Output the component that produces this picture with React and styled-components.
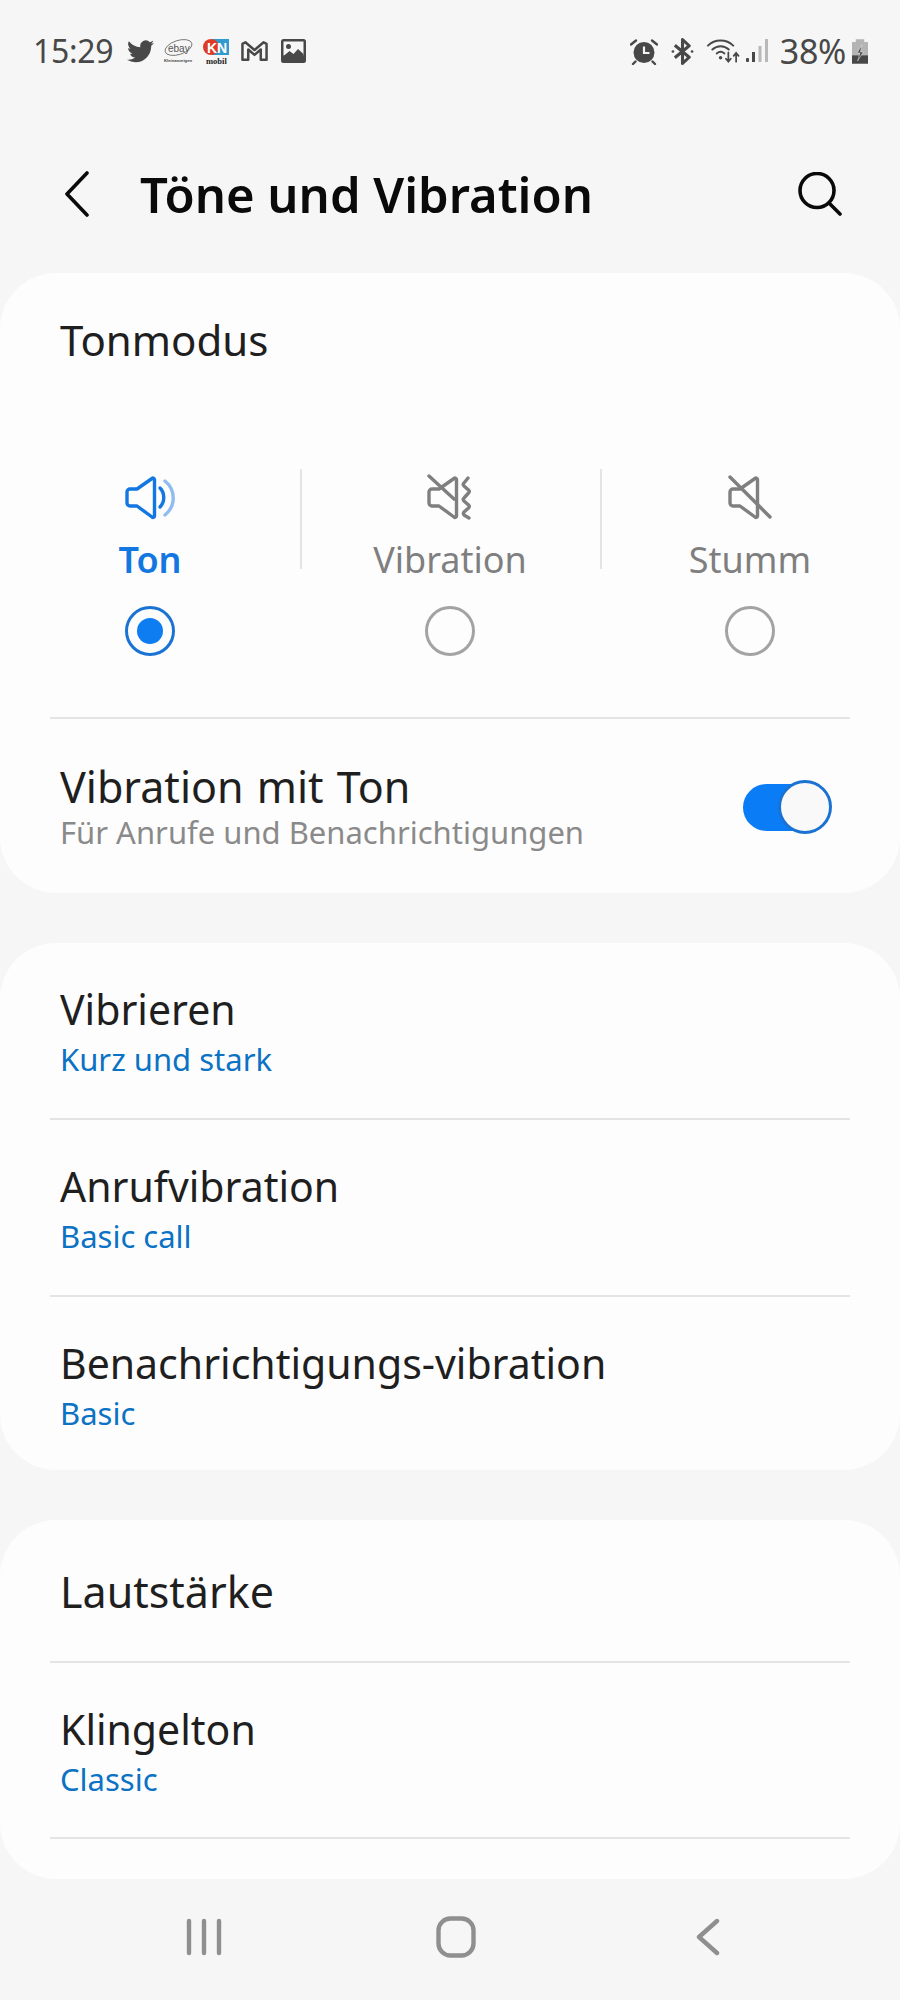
import styled, { createGlobalStyle } from "styled-components";

const GlobalStyle = createGlobalStyle`
  html, body {
    margin: 0;
    padding: 0;
    background: #f6f6f6;
  }
  * {
    box-sizing: border-box;
  }
`;

const Page = styled.div`
  width: 900px;
  height: 2000px;
  background: #f6f6f6;
  font-family: "Noto Sans", "Open Sans", sans-serif;
  display: flex;
  flex-direction: column;
  overflow: hidden;
`;

const StatusBar = styled.div`
  height: 100px;
  padding: 2px 32px 0 33px;
  display: flex;
  align-items: center;
  justify-content: space-between;
  color: #484848;
`;

const StatusGroup = styled.div`
  display: flex;
  align-items: center;
`;

const Glyph = styled.span`
  display: flex;
  margin-left: ${(p) => p.$ml || 0}px;
`;

const StatusText = styled.span`
  font-size: ${(p) => p.$size || 32}px;
  line-height: 36px;
  letter-spacing: -0.3px;
  margin-left: ${(p) => p.$ml || 0}px;
`;

const Header = styled.header`
  height: 173px;
  padding: 14px 58px 0 65px;
  display: flex;
  align-items: center;
`;

const Title = styled.h1`
  flex: 1;
  margin: 0 0 0 51px;
  font-size: 49px;
  font-weight: 600;
  color: #0a0a0a;
`;

const Cards = styled.div`
  display: flex;
  flex-direction: column;
  gap: 50px;
`;

const Card = styled.section`
  background: #fdfdfd;
  border-radius: 56px;
  overflow: hidden;
  height: ${(p) => p.$height}px;
`;

const CardTitle = styled.div`
  padding: 39px 60px 0;
  font-size: 42px;
  line-height: 56px;
  color: #1f1f1f;
`;

const ModeRow = styled.div`
  margin-top: 101px;
  padding-bottom: 61px;
  display: grid;
  grid-template-columns: repeat(3, 300px);
`;

const Mode = styled.div`
  position: relative;
  padding-top: 5px;
  display: flex;
  flex-direction: column;
  align-items: center;
  color: ${(p) => (p.$active ? "#1277e0" : "#7f7f7f")};

  &::before {
    content: "";
    display: ${(p) => (p.$divided ? "block" : "none")};
    position: absolute;
    left: 0;
    top: 0;
    width: 2px;
    height: 100px;
    background: #e4e4e4;
  }
`;

const ModeLabel = styled.div`
  margin-top: 17px;
  font-size: 36px;
  line-height: 46px;
  font-weight: ${(p) => (p.$active ? 600 : 400)};
`;

const Radio = styled.div`
  margin-top: 23px;
  width: 50px;
  height: 50px;
  border-radius: 50%;
  border: 3px solid ${(p) => (p.$active ? "#1a73d2" : "#a3a3a3")};
  display: flex;
  align-items: center;
  justify-content: center;

  &::after {
    content: "";
    display: ${(p) => (p.$active ? "block" : "none")};
    width: 26px;
    height: 26px;
    border-radius: 50%;
    background: #0f7df2;
  }
`;

const Divider = styled.div`
  height: 2px;
  margin: 0 50px;
  background: #e4e4e4;
`;

const Row = styled.div`
  height: ${(p) => p.$height || 175}px;
  padding: 2px 60px 0;
  display: flex;
  align-items: center;
  justify-content: space-between;
`;

const RowText = styled.div`
  display: flex;
  flex-direction: column;
`;

const RowTitle = styled.div`
  font-size: ${(p) => p.$size || 41}px;
  line-height: 50px;
  word-spacing: 2px;
  color: #1f1f1f;
`;

const RowSub = styled.div`
  margin-top: ${(p) => (p.$blue ? 5 : 0)}px;
  font-size: 31px;
  line-height: 40px;
  color: ${(p) => (p.$blue ? "#0b72c4" : "#8a8a8a")};
`;

const Toggle = styled.div`
  position: relative;
  width: 84px;
  height: 47px;
  margin-right: 13px;
  border-radius: 24px;
  background: #0a7cf5;
`;

const Knob = styled.div`
  position: absolute;
  right: -5px;
  top: -4px;
  width: 54px;
  height: 54px;
  border-radius: 50%;
  background: #f9f9f9;
  border: 3px solid #1a73d2;
`;

const NavBar = styled.nav`
  flex: 1;
  padding: 0 0 5px 186px;
  display: grid;
  grid-template-columns: 250px 260px auto;
  align-items: center;
`;

const TwitterIcon = () => (
  <svg width="27" height="23" viewBox="0 0 24 20" fill="#484848">
    <path d="M24 2.400c-.9.4-1.800.7-2.800.8 1-.6 1.800-1.600 2.200-2.700-1 .6-2 1-3.100 1.200A4.900 4.900 0 0 0 11.900 6.200 14 14 0 0 1 1.700.9a4.900 4.900 0 0 0 1.500 6.600c-.8 0-1.600-.2-2.200-.6 0 2.400 1.700 4.400 3.900 4.900-.7.2-1.500.2-2.200.1.6 2 2.400 3.400 4.600 3.400A9.900 9.900 0 0 1 0 17.300 14 14 0 0 0 7.500 19.500c9.100 0 14.300-7.700 14-14.600 1-.7 1.800-1.600 2.500-2.500z" />
  </svg>
);

const EbayIcon = () => (
  <svg width="30" height="25" viewBox="0 0 30 25">
    <ellipse cx="15.500" cy="8.500" rx="14" ry="7" transform="rotate(-18 15.500 8.500)" fill="none" stroke="#666" strokeWidth="0.800" />
    <text x="5" y="12.500" fontFamily="Liberation Sans" fontSize="10" fill="#555">ebay</text>
    <text x="1" y="23" fontFamily="Liberation Sans" fontSize="4" fontWeight="700" fill="#444" textLength="28" lengthAdjust="spacingAndGlyphs">Kleinanzeigen</text>
  </svg>
);

const KnIcon = () => (
  <svg width="26" height="25" viewBox="0 0 26 25">
    <rect x="9" y="0" width="17" height="16" fill="#2f9bd0" />
    <circle cx="8" cy="8" r="8" fill="#dd3b26" />
    <text x="4" y="13.500" fontFamily="Liberation Sans" fontSize="14" fontWeight="700" fill="#fff">KN</text>
    <text x="3" y="25" fontFamily="Liberation Serif" fontSize="8.500" fontWeight="700" fill="#222">mobil</text>
  </svg>
);

const GmailIcon = () => (
  <svg width="27" height="22" viewBox="0 0 28 22" fill="none" stroke="#484848" strokeWidth="2.600" strokeLinejoin="round">
    <path d="M1.500 20V3.500l3-1.500L14 10l9.500-8 3 1.500V20h-6V9.500L14 15 7.500 9.500V20z" />
  </svg>
);

const PictureIcon = () => (
  <svg width="25" height="24" viewBox="0 0 25 24">
    <rect width="25" height="24" rx="2.500" fill="#484848" />
    <rect x="2.500" y="2.500" width="20" height="14" fill="#f6f6f6" />
    <circle cx="7.500" cy="7.500" r="2.500" fill="#484848" />
    <path d="M2.500 17l6-5 4 3 4.500-5 5.500 5v4h-20z" fill="#484848" />
  </svg>
);

const AlarmIcon = () => (
  <svg width="28" height="27" viewBox="0 0 28 27">
    <circle cx="14" cy="14.500" r="10.500" fill="#484848" />
    <path d="M14 8.500v6.500h5.500" fill="none" stroke="#f6f6f6" strokeWidth="2.200" />
    <path d="M1 6.500 6 2.500M27 6.500 22 2.500M5.500 23.500l-2.500 2.500M22.500 23.500l2.500 2.500" stroke="#484848" strokeWidth="2.400" strokeLinecap="round" />
  </svg>
);

const BluetoothIcon = () => (
  <svg width="23" height="27" viewBox="0 0 24 28" fill="none" stroke="#484848" strokeWidth="3.200">
    <path d="M4 7.500 19 20l-7 6.500V1.500L19 8 4 20.500" strokeLinejoin="round" />
    <circle cx="2" cy="14" r="1.400" fill="#484848" stroke="none" />
    <circle cx="22" cy="14" r="1.400" fill="#484848" stroke="none" />
  </svg>
);

const WifiIcon = () => (
  <svg width="33" height="26" viewBox="0 0 34 26" fill="none" stroke="#484848" strokeLinecap="round">
    <path d="M1 7.500C8 .5 20 .5 27 7.500" strokeWidth="2" />
    <path d="M5.500 11.500c5-4.500 12-4.500 17 0" strokeWidth="2" />
    <path d="M10 15.500c2.500-2 5.500-2 8 0" strokeWidth="2" />
    <circle cx="14" cy="20" r="1.800" fill="#484848" stroke="none" />
    <path d="M22 14.500v9M19.500 21l2.500 3 2.500-3M30 24v-9M27.500 18l2.500-3 2.500 3" strokeWidth="1.800" />
  </svg>
);

const SignalIcon = () => (
  <svg width="22" height="24" viewBox="0 0 22 24">
    <rect x="0" y="19" width="3" height="4" rx="1" fill="#484848" />
    <rect x="6" y="13" width="3" height="10" fill="#484848" />
    <rect x="12.500" y="7" width="3" height="16" fill="#b9b9b9" />
    <rect x="19" y="0" width="3" height="23" fill="#b9b9b9" />
  </svg>
);

const BatteryIcon = () => (
  <svg width="16" height="25" viewBox="0 0 17 26">
    <rect x="4" y="0" width="9" height="4" fill="#b4b4b4" />
    <rect x="0" y="3" width="17" height="14" fill="#b4b4b4" />
    <rect x="0" y="17" width="17" height="9" fill="#484848" />
    <path d="M10.500 6 5.500 14.500h3L6 23l6-9.500H9z" fill="#484848" stroke="#f6f6f6" strokeWidth="0.500" />
  </svg>
);

const BackIcon = () => (
  <svg width="24" height="46" viewBox="0 0 24 46" fill="none" stroke="#0a0a0a" strokeWidth="3.600" strokeLinecap="round" strokeLinejoin="round">
    <path d="M22 2 2 23l20 21" />
  </svg>
);

const SearchIcon = () => (
  <svg width="44" height="44" viewBox="0 0 44 44" fill="none" stroke="#0a0a0a" strokeWidth="3.600" strokeLinecap="round">
    <circle cx="19" cy="18.500" r="17" />
    <path d="M31 31 42 42" />
  </svg>
);

const SpeakerBody = () => (
  <path d="M27 4.500 12 15H5a3 3 0 0 0-3 3v11a3 3 0 0 0 3 3h7l15 11a1.500 1.500 0 0 0 2.500-1.200V5.700A1.500 1.500 0 0 0 27 4.500z" />
);

const SoundIcon = () => (
  <svg width="50" height="46" viewBox="0 0 50 46" fill="none" stroke="#1277e0" strokeWidth="3.400" strokeLinejoin="round" strokeLinecap="round">
    <SpeakerBody />
    <path d="M35 14c5 5 5 14 0 19" />
    <path d="M40 7c11 9 11 25 0 34" stroke="#8fbdef" />
  </svg>
);

const VibrateIcon = () => (
  <svg width="46" height="46" viewBox="0 0 46 46" fill="none" stroke="#7f7f7f" strokeWidth="3.400" strokeLinejoin="round" strokeLinecap="round">
    <SpeakerBody />
    <path d="M2 2 27 25" />
    <path d="M41 4 37 9c-1 1-1 2 0 3l4.500 4c1 1 1 2 0 3L37 24c-1 1-1 2 0 3l4.500 4c1 1 1 2 0 3L37 38c-.8 1-.8 2 0 3l5 3" />
  </svg>
);

const MuteIcon = () => (
  <svg width="44" height="46" viewBox="0 0 44 46" fill="none" stroke="#7f7f7f" strokeWidth="3.400" strokeLinejoin="round" strokeLinecap="round">
    <SpeakerBody />
    <path d="M2 3 42 43" />
  </svg>
);

const RecentsIcon = () => (
  <svg width="36" height="38" viewBox="0 0 36 38" stroke="#8f8f8f" strokeWidth="4.400" strokeLinecap="round">
    <path d="M3 3v32M18 3v32M33 3v32" />
  </svg>
);

const HomeIcon = () => (
  <svg width="40" height="42" viewBox="0 0 40 42" fill="none" stroke="#8f8f8f" strokeWidth="4.400">
    <rect x="2.500" y="2.500" width="35" height="37" rx="12" />
  </svg>
);

const NavBackIcon = () => (
  <svg width="24" height="38" viewBox="0 0 24 38" fill="none" stroke="#8f8f8f" strokeWidth="4.400" strokeLinecap="round" strokeLinejoin="round">
    <path d="M21 3 3 19l18 16" />
  </svg>
);

const modes = [
  { label: "Ton", icon: <SoundIcon />, active: true },
  { label: "Vibration", icon: <VibrateIcon /> },
  { label: "Stumm", icon: <MuteIcon /> },
];

const vibrationRows = [
  { title: "Vibrieren", sub: "Kurz und stark" },
  { title: "Anrufvibration", sub: "Basic call" },
  { title: "Benachrichtigungs-vibration", sub: "Basic" },
];

const App = () => {
  return (
    <Page>
      <GlobalStyle />
      <StatusBar>
        <StatusGroup>
          <StatusText>15:29</StatusText>
          <Glyph $ml={14}><TwitterIcon /></Glyph>
          <Glyph $ml={9}><EbayIcon /></Glyph>
          <Glyph $ml={10}><KnIcon /></Glyph>
          <Glyph $ml={12}><GmailIcon /></Glyph>
          <Glyph $ml={13}><PictureIcon /></Glyph>
        </StatusGroup>
        <StatusGroup>
          <AlarmIcon />
          <Glyph $ml={13}><BluetoothIcon /></Glyph>
          <Glyph $ml={13}><WifiIcon /></Glyph>
          <Glyph $ml={6}><SignalIcon /></Glyph>
          <StatusText $ml={12} $size={34}>38%</StatusText>
          <Glyph $ml={6}><BatteryIcon /></Glyph>
        </StatusGroup>
      </StatusBar>

      <Header>
        <BackIcon />
        <Title>Töne und Vibration</Title>
        <SearchIcon />
      </Header>

      <Cards>
        <Card $height={620}>
          <CardTitle>Tonmodus</CardTitle>
          <ModeRow>
            {modes.map((mode, i) => (
              <Mode key={mode.label} $active={mode.active} $divided={i > 0}>
                {mode.icon}
                <ModeLabel $active={mode.active}>{mode.label}</ModeLabel>
                <Radio $active={mode.active} />
              </Mode>
            ))}
          </ModeRow>
          <Divider />
          <Row $height={174}>
            <RowText>
              <RowTitle $size={43}>Vibration mit Ton</RowTitle>
              <RowSub>Für Anrufe und Benachrichtigungen</RowSub>
            </RowText>
            <Toggle>
              <Knob />
            </Toggle>
          </Row>
        </Card>

        <Card $height={527}>
          {vibrationRows.map((row, i) => (
            <div key={row.title}>
              {i > 0 && <Divider />}
              <Row>
                <RowText>
                  <RowTitle>{row.title}</RowTitle>
                  <RowSub $blue>{row.sub}</RowSub>
                </RowText>
              </Row>
            </div>
          ))}
        </Card>

        <Card $height={359}>
          <Row $height={141}>
            <RowTitle $size={43}>Lautstärke</RowTitle>
          </Row>
          <Divider />
          <Row $height={174}>
            <RowText>
              <RowTitle>Klingelton</RowTitle>
              <RowSub $blue>Classic</RowSub>
            </RowText>
          </Row>
          <Divider />
        </Card>
      </Cards>

      <NavBar>
        <RecentsIcon />
        <HomeIcon />
        <NavBackIcon />
      </NavBar>
    </Page>
  );
};

export default App;
